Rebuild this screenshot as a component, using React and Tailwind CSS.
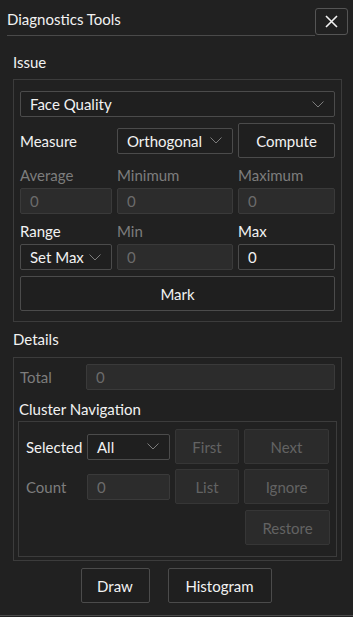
import React from 'react';

const Chevron = () => (
  <svg width="12" height="7" viewBox="0 0 12 7" fill="none" className="shrink-0">
    <path d="M0.5 0.5 L6 6 L11.5 0.5" stroke="#7c7c7c" strokeWidth="1" />
  </svg>
);

const Combo = ({ label, className = '' }) => (
  <div
    className={`h-[26px] flex items-center justify-between pl-[9px] pr-[10px] border border-[#4b4b4b] rounded-[2px] bg-[#1f1f1f] text-[#f2f2f2] ${className}`}
  >
    <span>{label}</span>
    <Chevron />
  </div>
);

const Field = ({ value, disabled, className = '' }) => (
  <div
    className={`h-[26px] flex items-center pl-[9px] rounded-[2px] border ${
      disabled
        ? 'bg-[#2c2c2c] border-[#3a3a3a] text-[#6b6b6b]'
        : 'bg-[#1f1f1f] border-[#4b4b4b] text-[#f2f2f2]'
    } ${className}`}
  >
    {value}
  </div>
);

const Btn = ({ label, disabled, className = '' }) => (
  <div
    className={`h-[35px] flex items-center justify-center rounded-[2px] border ${
      disabled
        ? 'bg-[#2b2b2b] border-[#363636] text-[#636363]'
        : 'bg-[#1f1f1f] border-[#4b4b4b] text-[#f2f2f2]'
    } ${className}`}
  >
    {label}
  </div>
);

export default function App() {
  return (
    <div
      className="w-[353px] h-[617px] bg-[#212121] text-[#f2f2f2] text-[15px] leading-[18px] flex flex-col overflow-hidden"
      style={{ fontFamily: 'Lato, "Noto Sans", sans-serif' }}
    >
      {/* title bar */}
      <div className="flex items-start pl-[7px] pr-[5px] pt-[8px]">
        <div className="flex-1 h-[28px] border-b border-[#4a4a4a] flex items-center">
          <span className="-mt-[6px]">Diagnostics Tools</span>
        </div>
        <div className="w-[33px] h-[27px] border border-[#555] rounded-[3px] flex items-center justify-center">
          <svg width="13" height="13" viewBox="0 0 13 13">
            <path d="M1 1 L12 12 M12 1 L1 12" stroke="#f2f2f2" strokeWidth="1.6" />
          </svg>
        </div>
      </div>

      {/* issue */}
      <div className="pl-[13px] mt-[17px] mb-[8px]">Issue</div>
      <div className="ml-[13px] mr-[11px] border border-[#3c3c3c] px-[6px] pt-[11px] pb-[10px]">
        <Combo label="Face Quality" />
        <div className="grid grid-cols-[92px_116px_1fr] gap-x-[5px] mt-[6px]">
          <div className="h-[35px] flex items-center">Measure</div>
          <div className="flex items-center">
            <Combo label="Orthogonal" className="w-full" />
          </div>
          <Btn label="Compute" />

          <div className="pt-[8px] pb-[4px] text-[#7d7d7d]">Average</div>
          <div className="pt-[8px] pb-[4px] text-[#7d7d7d]">Minimum</div>
          <div className="pt-[8px] pb-[4px] text-[#7d7d7d]">Maximum</div>

          <Field value="0" disabled />
          <Field value="0" disabled />
          <Field value="0" disabled />

          <div className="pt-[8px] pb-[4px]">Range</div>
          <div className="pt-[8px] pb-[4px] text-[#7d7d7d]">Min</div>
          <div className="pt-[8px] pb-[4px]">Max</div>

          <Combo label="Set Max" />
          <Field value="0" disabled />
          <Field value="0" />
        </div>
        <Btn label="Mark" className="mt-[6px]" />
      </div>

      {/* details */}
      <div className="pl-[13px] mt-[8px] mb-[9px]">Details</div>
      <div className="ml-[13px] mr-[11px] border border-[#3c3c3c] px-[4px] pt-[6px] pb-[3px]">
        <div className="flex items-center px-[2px]">
          <span className="w-[66px] text-[#7d7d7d]">Total</span>
          <Field value="0" disabled className="flex-1" />
        </div>
        <div className="mt-[10px] mb-[3px] pl-[1px]">Cluster Navigation</div>
        <div className="border border-[#3c3c3c] pl-[7px] pr-[6px] pt-[7px] pb-[11px] flex flex-col gap-y-[5px]">
          <div className="flex items-center">
            <span className="w-[61px]">Selected</span>
            <Combo label="All" className="w-[83px]" />
            <Btn label="First" disabled className="w-[64px] ml-[5px]" />
            <Btn label="Next" disabled className="w-[85px] ml-[5px]" />
          </div>
          <div className="flex items-center">
            <span className="w-[61px] text-[#7d7d7d]">Count</span>
            <Field value="0" disabled className="w-[83px]" />
            <Btn label="List" disabled className="w-[64px] ml-[5px]" />
            <Btn label="Ignore" disabled className="w-[85px] ml-[5px]" />
          </div>
          <div className="flex justify-end mt-[1px]">
            <Btn label="Restore" disabled className="w-[85px]" />
          </div>
        </div>
      </div>

      {/* footer buttons */}
      <div className="flex justify-center gap-[18px] mt-[7px] pr-[1px]">
        <Btn label="Draw" className="w-[69px]" />
        <Btn label="Histogram" className="w-[104px]" />
      </div>
      <div className="flex-1" />
      <div className="h-[2px] border-t border-[#4a4a4a]" />
    </div>
  );
}
